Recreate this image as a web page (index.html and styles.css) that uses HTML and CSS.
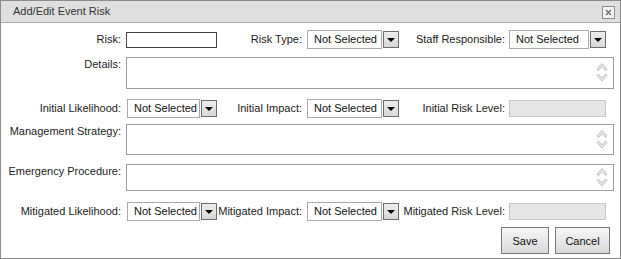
FILE: index.html
```html
<!DOCTYPE html>
<html>
<head>
<meta charset="utf-8">
<link rel="stylesheet" href="styles.css">
</head>
<body>
<div class="dialog">
  <div class="titlebar">
    <span class="title">Add/Edit Event Risk</span>
    <span class="close"><svg width="11" height="11" viewBox="0 0 11 11"><path d="M3 3 L8 8 M8 3 L3 8" stroke="#666" stroke-width="1.2" fill="none"/></svg></span>
  </div>
  <div class="form">
    <div class="row line">
      <label class="lbl l1">Risk:</label>
      <input class="txt" type="text">
      <label class="lbl l3">Risk Type:</label>
      <div class="sel w92"><span class="sel-text">Not Selected</span><span class="sel-btn"><i class="tri"></i></span></div>
      <label class="lbl l5">Staff Responsible:</label>
      <div class="sel w97"><span class="sel-text">Not Selected</span><span class="sel-btn"><i class="tri"></i></span></div>
    </div>
    <div class="row area r-details">
      <label class="lbl l1 top">Details:</label>
      <div class="ta h32"><svg class="chev" width="12" height="21" viewBox="0 0 12 21"><polygon points="1,7 6,1.5 11,7 9.5,8.5 6,4.5 2.5,8.5" fill="#ebebeb" stroke="#b8b8b8" stroke-width="0.9"/><polygon points="1,13.5 6,19 11,13.5 9.5,12 6,16 2.5,12" fill="#ebebeb" stroke="#b8b8b8" stroke-width="0.9"/></svg></div>
    </div>
    <div class="row line r-initial">
      <label class="lbl l1">Initial Likelihood:</label>
      <div class="sel w90"><span class="sel-text">Not Selected</span><span class="sel-btn"><i class="tri"></i></span></div>
      <label class="lbl l3">Initial Impact:</label>
      <div class="sel w92"><span class="sel-text">Not Selected</span><span class="sel-btn"><i class="tri"></i></span></div>
      <label class="lbl l5">Initial Risk Level:</label>
      <input class="dis" type="text" disabled>
    </div>
    <div class="row area r-mgmt">
      <label class="lbl l1 top">Management Strategy:</label>
      <div class="ta h31"><svg class="chev" width="12" height="21" viewBox="0 0 12 21"><polygon points="1,7 6,1.5 11,7 9.5,8.5 6,4.5 2.5,8.5" fill="#ebebeb" stroke="#b8b8b8" stroke-width="0.9"/><polygon points="1,13.5 6,19 11,13.5 9.5,12 6,16 2.5,12" fill="#ebebeb" stroke="#b8b8b8" stroke-width="0.9"/></svg></div>
    </div>
    <div class="row area r-emerg">
      <label class="lbl l1 top">Emergency Procedure:</label>
      <div class="ta h27"><svg class="chev" width="12" height="21" viewBox="0 0 12 21"><polygon points="1,7 6,1.5 11,7 9.5,8.5 6,4.5 2.5,8.5" fill="#ebebeb" stroke="#b8b8b8" stroke-width="0.9"/><polygon points="1,13.5 6,19 11,13.5 9.5,12 6,16 2.5,12" fill="#ebebeb" stroke="#b8b8b8" stroke-width="0.9"/></svg></div>
    </div>
    <div class="row line r-mit">
      <label class="lbl l1">Mitigated Likelihood:</label>
      <div class="sel w90"><span class="sel-text">Not Selected</span><span class="sel-btn"><i class="tri"></i></span></div>
      <label class="lbl l3">Mitigated Impact:</label>
      <div class="sel w92"><span class="sel-text">Not Selected</span><span class="sel-btn"><i class="tri"></i></span></div>
      <label class="lbl l5">Mitigated Risk Level:</label>
      <input class="dis" type="text" disabled>
    </div>
    <div class="buttons">
      <button class="btn save">Save</button>
      <button class="btn cancel">Cancel</button>
    </div>
  </div>
</div>
</body>
</html>
```
FILE: styles.css
```css
* { box-sizing: border-box; }
html, body { margin: 0; padding: 0; background: #fff; }
body {
  font-family: "Liberation Sans", Arial, sans-serif;
  font-size: 11px;
  color: #222;
}
.dialog {
  width: 621px;
  height: 259px;
  border: 1px solid #8c8c8c;
  background: #fff;
}
.titlebar {
  height: 22px;
  background: #dfdfdf;
  border-bottom: 1px solid #a8a8a8;
  display: flex;
  align-items: center;
  justify-content: space-between;
  padding: 0 5px 0 12px;
}
.title { color: #333; font-size: 11px; line-height: 13px; }
.close {
  width: 13px;
  height: 13px;
  border: 1px solid #8e8e8e;
  background: #f2f2f2;
  display: flex;
  align-items: center;
  justify-content: center;
  margin-top: 1px;
}
.close svg { display: block; }
.form { padding: 7px 0 0 3px; }
.row {
  display: grid;
  grid-template-columns: 122px 91px 89px 94px 108px 106px;
}
.line { align-items: center; height: 19px; }
.area { align-items: start; }
.r-details { margin-top: 8px; }
.r-initial { margin-top: 10px; }
.r-mgmt { margin-top: 6px; }
.r-emerg { margin-top: 9px; }
.r-mit { margin-top: 11px; }
.lbl {
  justify-self: end;
  white-space: nowrap;
  line-height: 13px;
  color: #222;
}
.l1 { padding-right: 5px; }
.l3 { padding-right: 4px; }
.l5 { padding-right: 3px; }
.lbl.top { margin-top: 1px; }
.txt {
  width: 91px;
  height: 16px;
  border: 1px solid #454545;
  margin: 0;
  padding: 0;
  background: #fff;
}
.dis {
  width: 97px;
  height: 17px;
  margin: 0 0 0 1px;
  padding: 0;
  border: 1px solid #c6c6c6;
  background: #e6e6e6;
}
.sel {
  display: flex;
  align-items: center;
  height: 19px;
  margin-left: 1px;
}
.w90 { width: 90px; }
.w92 { width: 92px; }
.w97 { width: 97px; }
.sel-text {
  flex: 1;
  height: 19px;
  border: 1px solid #a9a9a9;
  padding-left: 6px;
  line-height: 17px;
  color: #111;
  white-space: nowrap;
  overflow: hidden;
}
.sel-btn {
  width: 16px;
  height: 17px;
  margin-left: 1px;
  border: 1px solid #6c6c6c;
  background: linear-gradient(#ececec, #d8d8d8);
  display: flex;
  align-items: center;
  justify-content: center;
}
.tri {
  width: 0;
  height: 0;
  border-left: 4px solid transparent;
  border-right: 4px solid transparent;
  border-top: 4px solid #000;
  margin-top: 1px;
}
.ta {
  grid-column: 2 / 7;
  width: 488px;
  border: 1px solid #9c9c9c;
  background: #fff;
  position: relative;
}
.h32 { height: 32px; }
.h31 { height: 31px; }
.h27 { height: 27px; }
.chev {
  position: absolute;
  right: 5px;
  top: 4px;
}
.h27 .chev { top: 2px; }
.buttons {
  display: flex;
  justify-content: flex-end;
  gap: 6px;
  margin-top: 6px;
  padding-right: 10px;
}
.btn {
  height: 27px;
  border: 1px solid #777;
  background: linear-gradient(#f6f6f6 0%, #e8e8e8 50%, #d9d9d9 100%);
  font-family: "Liberation Sans", Arial, sans-serif;
  font-size: 11px;
  color: #111;
  padding: 0;
  margin: 0;
}
.save { width: 48px; }
.cancel { width: 55px; }
```
